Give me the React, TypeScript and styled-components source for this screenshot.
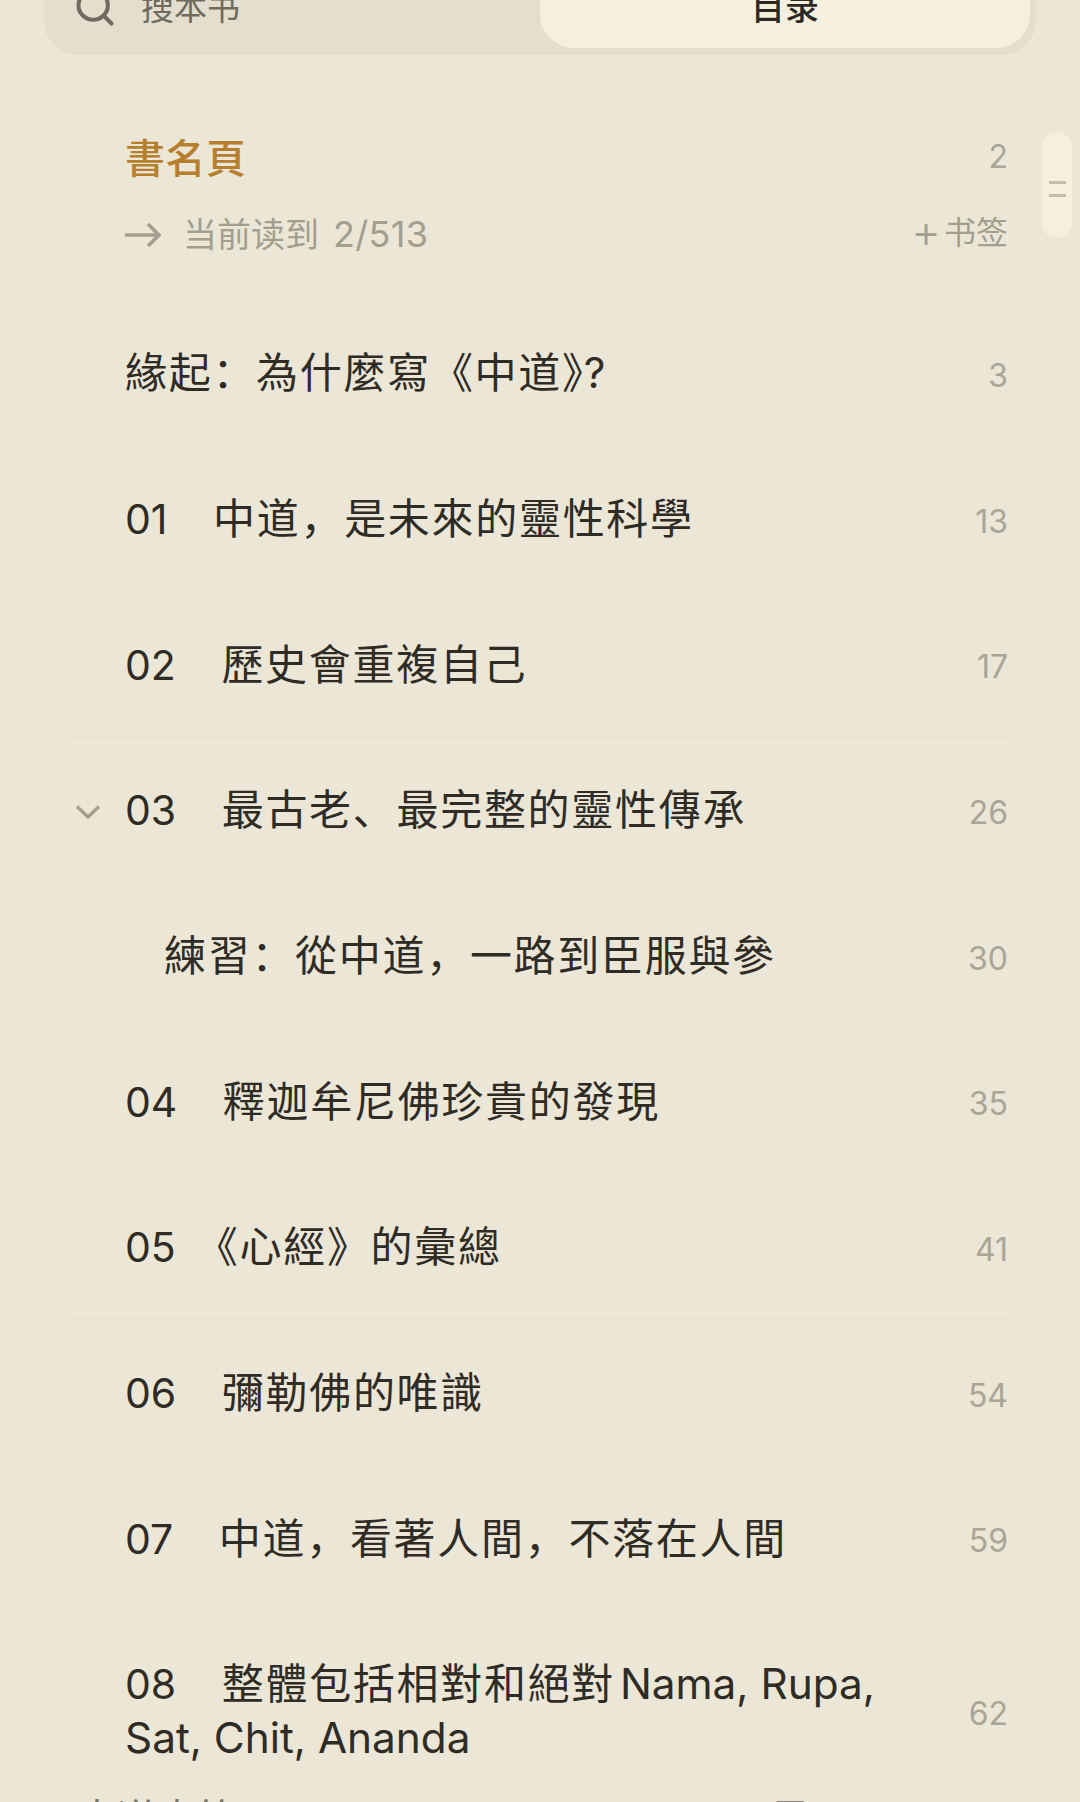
import React from 'react';
import styled, { createGlobalStyle } from 'styled-components';
import { Search } from 'lucide-react';

const GlobalStyle = createGlobalStyle`
  html, body {
    margin: 0;
    padding: 0;
    background-color: #ece6d6;
  }
`;

const Page = styled.div`
  position: relative;
  width: 1080px;
  height: 1802px;
  overflow: hidden;
  background-color: #ece6d6;
  color: #2f2c26;
  font-family: Inter, "Noto Sans CJK SC", sans-serif;
`;

const Header = styled.div`
  display: flow-root;
  height: 82px;
  padding: 0 44px;
  border-bottom: 1px solid #e5e0cf;
`;

const TabBar = styled.div`
  display: flex;
  height: 100px;
  margin-top: -45px;
  padding: 0 6px 7px 0;
  box-sizing: border-box;
  border-radius: 34px;
  background-color: #e3decd;
`;

const SearchTab = styled.div`
  flex: 1;
  display: flex;
  align-items: flex-end;
  gap: 24px;
  padding: 0 0 23px 29px;
  color: #6f6b60;
  font-size: 33px;
  line-height: 33px;
`;

const SearchIcon = styled(Search)`
  flex: none;
  margin-bottom: -4px;
`;

const ActiveTab = styled.div`
  width: 490px;
  display: flex;
  align-items: flex-end;
  justify-content: center;
  padding-bottom: 23px;
  box-sizing: border-box;
  border-radius: 34px;
  background-color: #f5f0dd;
  color: #2b2924;
  font-size: 34px;
  font-weight: 500;
  line-height: 34px;
`;

const Toc = styled.div`
  margin: 0 72px;
`;

const CurrentEntry = styled.div`
  height: 217px;
  padding: 51px 0 0 53px;
  box-sizing: border-box;
  border-bottom: 1px solid #e5e0cf;
`;

const CurrentTitleRow = styled.div`
  display: flex;
  align-items: center;
  justify-content: space-between;
  height: 44px;
`;

const CurrentTitle = styled.span`
  color: #b57f2e;
  font-size: 40px;
  font-weight: 500;
  letter-spacing: 0.5px;
`;

const ProgressRow = styled.div`
  display: flex;
  align-items: center;
  justify-content: space-between;
  margin-top: 34px;
  color: #a29e90;
`;

const Progress = styled.div`
  display: flex;
  align-items: center;
  gap: 22px;
  font-size: 34px;
  line-height: 44px;
`;

const ProgressCount = styled.span`
  margin-left: 14px;
  font-size: 36px;
  letter-spacing: 0.3px;
`;

const AddBookmark = styled.div`
  display: flex;
  align-items: center;
  gap: 3px;
  margin-top: -3px;
  font-size: 32px;
  line-height: 44px;
`;

const Plus = styled.span`
  margin-top: -5px;
  font-size: 46px;
  font-weight: 300;
  line-height: 42px;
`;

const Entry = styled.div<{ $tall?: boolean }>`
  display: grid;
  grid-template-columns: 53px 1fr auto;
  align-items: center;
  min-height: ${(p) => (p.$tall ? 202 : 145.7)}px;
  padding-top: ${(p) => (p.$tall ? 2 : 6)}px;
  box-sizing: border-box;
  border-bottom: ${(p) => (p.$tall ? 'none' : '1px solid #e5e0cf')};
`;

const Gutter = styled.div`
  display: flex;
  padding-left: 4px;
`;

const EntryTitle = styled.div<{ $indent?: boolean }>`
  padding: 0 60px 4px ${(p) => (p.$indent ? 39 : 0)}px;
  font-size: 42px;
  line-height: 54px;
  letter-spacing: 1.7px;
`;

const EntryNumber = styled.span<{ $tight?: boolean }>`
  margin-right: ${(p) => (p.$tight ? 20 : 45.5)}px;
  font-size: 41px;
  letter-spacing: 0;
`;

const LatinText = styled.span<{ $pull: number }>`
  margin-left: ${(p) => p.$pull}px;
  font-size: 42.3px;
  letter-spacing: 0;
`;

const PageNumber = styled.span`
  color: #a9a597;
  font-size: 32px;
  font-weight: 400;
`;

const ScrollHandle = styled.div`
  position: absolute;
  top: 132px;
  left: 1042px;
  width: 30px;
  height: 106px;
  display: flex;
  flex-direction: column;
  align-items: center;
  justify-content: center;
  gap: 10px;
  padding-top: 7px;
  box-sizing: border-box;
  border-radius: 15px;
  background-color: #f5f0de;
`;

const HandleLine = styled.span`
  width: 17px;
  height: 3px;
  background-color: #c2bdac;
`;

const BottomBar = styled.div`
  position: absolute;
  top: 1799px;
  left: 77px;
  right: 269px;
  display: flex;
  justify-content: space-between;
  color: #77736a;
  font-size: 40px;
  line-height: 40px;
`;

const ArrowIcon = () => (
  <svg width="36" height="26" viewBox="0 0 36 26" fill="none" stroke="#a29e90" strokeWidth="3.6">
    <path d="M0 13H34M23 2L34 13L23 24" />
  </svg>
);

const ChevronIcon = () => (
  <svg width="24" height="14" viewBox="0 0 24 14" fill="none" stroke="#a5a192" strokeWidth="3.5">
    <path d="M1 1.5L12 12L23 1.5" />
  </svg>
);

type TocEntry = {
  num?: string;
  title: string;
  latin?: string;
  latinPull?: number;
  page: number;
  expanded?: boolean;
  indent?: boolean;
  tall?: boolean;
  tight?: boolean;
};

const entries: TocEntry[] = [
  { title: '緣起：為什麼寫《中道》', latin: '?', latinPull: -22, page: 3 },
  { num: '01', title: '中道，是未來的靈性科學', page: 13 },
  { num: '02', title: '歷史會重複自己', page: 17 },
  { num: '03', title: '最古老、最完整的靈性傳承', page: 26, expanded: true },
  { title: '練習：從中道，一路到臣服與參', page: 30, indent: true },
  { num: '04', title: '釋迦牟尼佛珍貴的發現', page: 35 },
  { num: '05', title: '《心經》的彙總', page: 41, tight: true },
  { num: '06', title: '彌勒佛的唯識', page: 54 },
  { num: '07', title: '中道，看著人間，不落在人間', page: 59 },
  { num: '08', title: '整體包括相對和絕對', latin: ' Nama, Rupa, Sat, Chit, Ananda', latinPull: -7, page: 62, tall: true },
];

const App: React.FC = () => {
  return (
    <Page>
      <GlobalStyle />
      <Header>
        <TabBar>
          <SearchTab>
            <SearchIcon size={44} strokeWidth={2.2} />
            搜本书
          </SearchTab>
          <ActiveTab>目录</ActiveTab>
        </TabBar>
      </Header>

      <Toc>
        <CurrentEntry>
          <CurrentTitleRow>
            <CurrentTitle>書名頁</CurrentTitle>
            <PageNumber>2</PageNumber>
          </CurrentTitleRow>
          <ProgressRow>
            <Progress>
              <ArrowIcon />
              <span>
                当前读到
                <ProgressCount>2/513</ProgressCount>
              </span>
            </Progress>
            <AddBookmark>
              <Plus>+</Plus>
              书签
            </AddBookmark>
          </ProgressRow>
        </CurrentEntry>

        {entries.map((entry) => (
          <Entry key={entry.page} $tall={entry.tall}>
            <Gutter>{entry.expanded && <ChevronIcon />}</Gutter>
            <EntryTitle $indent={entry.indent}>
              {entry.num && <EntryNumber $tight={entry.tight}>{entry.num}</EntryNumber>}
              {entry.title}
              {entry.latin && <LatinText $pull={entry.latinPull ?? 0}>{entry.latin}</LatinText>}
            </EntryTitle>
            <PageNumber>{entry.page}</PageNumber>
          </Entry>
        ))}
      </Toc>

      <ScrollHandle>
        <HandleLine />
        <HandleLine />
      </ScrollHandle>

      <BottomBar>
        <span>中道書籍</span>
        <span>目录</span>
      </BottomBar>
    </Page>
  );
};

export default App;
